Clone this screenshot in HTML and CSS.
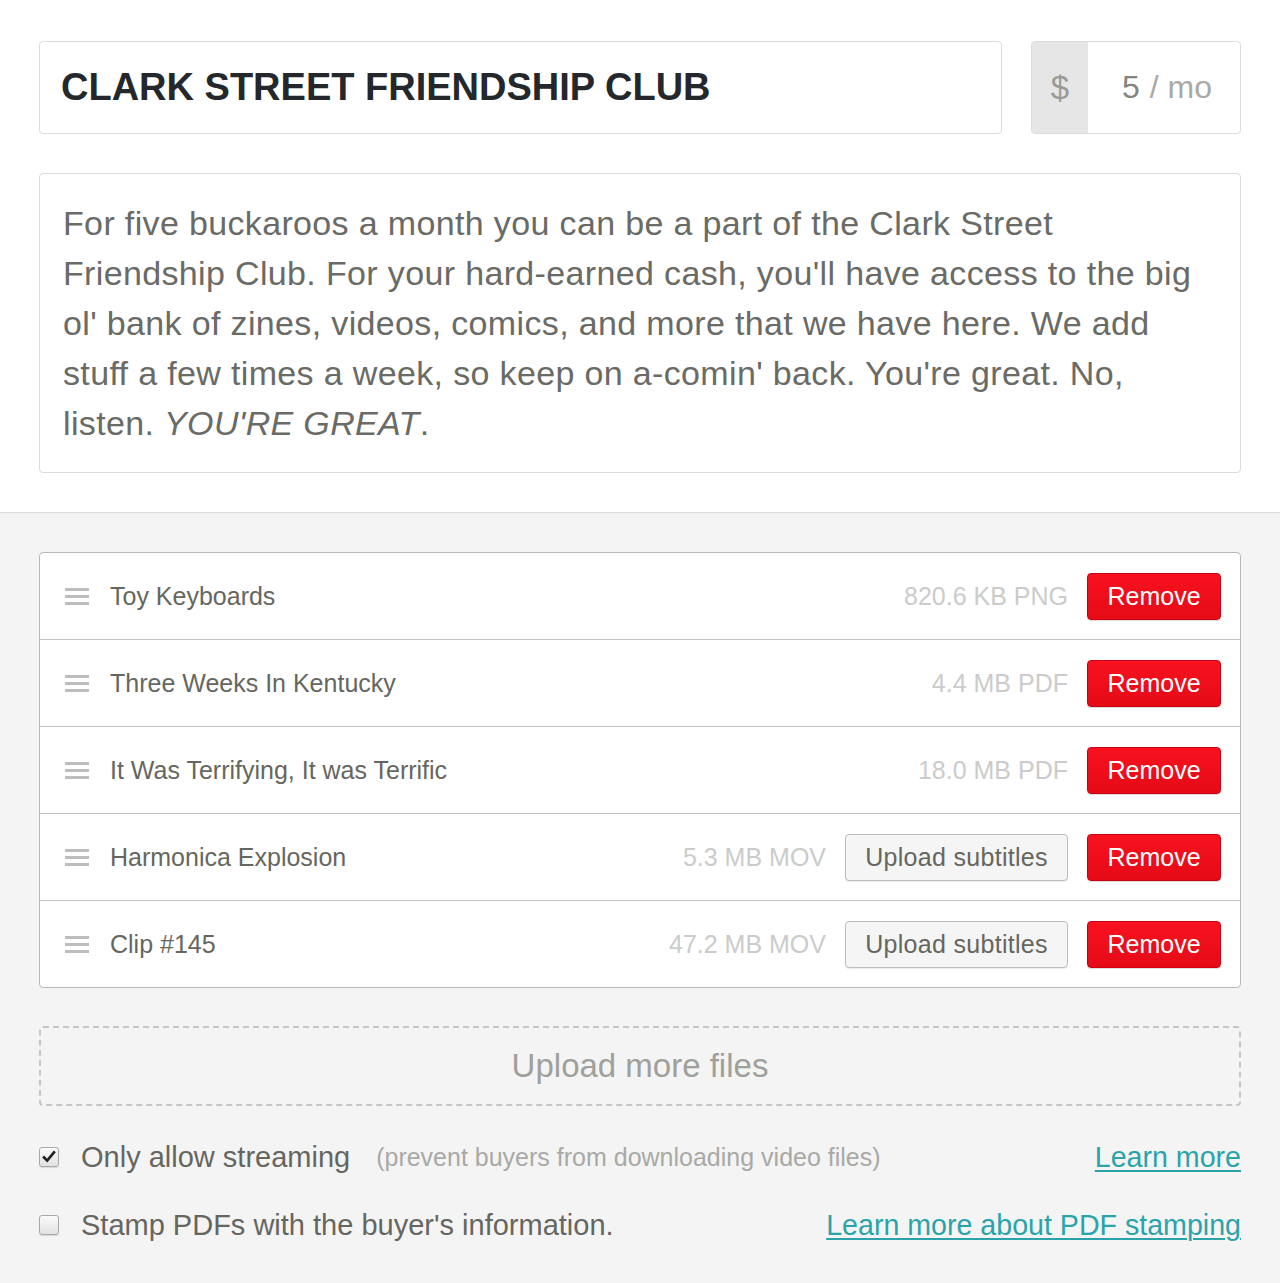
FILE: index.html
```html
<!DOCTYPE html>
<html>
<head>
<meta charset="utf-8">
<link rel="stylesheet" href="styles.css">
</head>
<body>
<div class="top">
  <div class="head-row">
    <div class="title-input">CLARK STREET FRIENDSHIP CLUB</div>
    <div class="price-input">
      <div class="price-prefix">$</div>
      <div class="price-value"><span class="num">5</span> <span class="unit">/ mo</span></div>
    </div>
  </div>
  <div class="desc">For five buckaroos a month you can be a part of the Clark Street Friendship Club. For your hard-earned cash, you'll have access to the big ol' bank of zines, videos, comics, and more that we have here. We add stuff a few times a week, so keep on a-comin' back. You're great. No, listen. <em>YOU'RE GREAT</em>.</div>
</div>
<div class="bottom">
  <div class="files">
    <div class="file">
      <span class="handle"><i></i><i></i><i></i></span>
      <span class="name">Toy Keyboards</span>
      <span class="size">820.6 KB PNG</span>
      <button class="btn-remove">Remove</button>
    </div>
    <div class="file">
      <span class="handle"><i></i><i></i><i></i></span>
      <span class="name">Three Weeks In Kentucky</span>
      <span class="size">4.4 MB PDF</span>
      <button class="btn-remove">Remove</button>
    </div>
    <div class="file">
      <span class="handle"><i></i><i></i><i></i></span>
      <span class="name">It Was Terrifying, It was Terrific</span>
      <span class="size">18.0 MB PDF</span>
      <button class="btn-remove">Remove</button>
    </div>
    <div class="file">
      <span class="handle"><i></i><i></i><i></i></span>
      <span class="name">Harmonica Explosion</span>
      <span class="size">5.3 MB MOV</span>
      <button class="btn-sub">Upload subtitles</button>
      <button class="btn-remove">Remove</button>
    </div>
    <div class="file">
      <span class="handle"><i></i><i></i><i></i></span>
      <span class="name">Clip #145</span>
      <span class="size">47.2 MB MOV</span>
      <button class="btn-sub">Upload subtitles</button>
      <button class="btn-remove">Remove</button>
    </div>
  </div>
  <div class="upload-more">Upload more files</div>
  <div class="option">
    <span class="cb checked"><svg viewBox="0 0 20 20" width="20" height="20"><path d="M4.5 10.5 L8 14 L15.5 5" fill="none" stroke="#222" stroke-width="3" stroke-linecap="square"/></svg></span>
    <span class="opt-label">Only allow streaming</span>
    <span class="opt-note">(prevent buyers from downloading video files)</span>
    <a class="learn" href="#">Learn more</a>
  </div>
  <div class="option">
    <span class="cb"></span>
    <span class="opt-label">Stamp PDFs with the buyer's information.</span>
    <a class="learn" href="#">Learn more about PDF stamping</a>
  </div>
</div>
</body>
</html>
```
FILE: styles.css
```css
* { box-sizing: border-box; }
html, body {
  margin: 0;
  padding: 0;
  background: #f4f4f4;
  font-family: "Liberation Sans", Arial, sans-serif;
}
.top {
  background: #fff;
  padding: 41px 39px 39px 39px;
  border-bottom: 1px solid #dcdcdc;
}
.head-row {
  display: flex;
  gap: 29px;
  height: 93px;
}
.title-input {
  flex: 1;
  border: 1px solid #dcdcdc;
  border-radius: 4px;
  display: flex;
  align-items: center;
  padding-left: 21px;
  font-size: 38px;
  font-weight: bold;
  color: #24272b;
}
.price-input {
  width: 210px;
  display: flex;
  border: 1px solid #dcdcdc;
  border-radius: 4px;
  overflow: hidden;
}
.price-prefix {
  width: 56px;
  background: #e6e6e6;
  color: #9a9a95;
  font-size: 33px;
  display: flex;
  align-items: center;
  justify-content: center;
}
.price-value {
  flex: 1;
  display: flex;
  align-items: center;
  justify-content: flex-end;
  padding-right: 28px;
  font-size: 32px;
  gap: 10px;
}
.price-value .num { color: #85857f; }
.price-value .unit { color: #a9a9a5; }
.desc {
  margin-top: 39px;
  border: 1px solid #dcdcdc;
  border-radius: 4px;
  padding: 24px 24px 24px 23px;
  font-size: 34px;
  letter-spacing: 0.35px;
  line-height: 50px;
  color: #6a6a66;
  height: 300px;
}
.desc em { font-style: italic; }
.bottom {
  padding: 39px 39px 40px 39px;
}
.files {
  background: #fff;
  border: 1px solid #b9b9b9;
  border-radius: 4px;
}
.file {
  height: 87px;
  display: flex;
  align-items: center;
  padding: 1px 19px 0 25px;
  border-top: 1px solid #c4c4c4;
}
.file:first-child { border-top: none; height: 86px; }
.handle {
  width: 24px;
  display: flex;
  flex-direction: column;
  gap: 4px;
  margin-right: 21px;
}
.handle i {
  display: block;
  height: 3px;
  background: #bdbdbd;
}
.name {
  flex: 1;
  font-size: 25px;
  color: #666661;
}
.size {
  font-size: 25px;
  color: #cbcbcb;
  margin-right: 19px;
}
.btn-remove {
  width: 134px;
  height: 47px;
  border: 1px solid #c8000f;
  border-radius: 4px;
  background: linear-gradient(#f8121f, #e60a17);
  color: #fff;
  font-family: inherit;
  font-size: 25px;
  padding: 0;
  box-shadow: 0 1px 1px rgba(0,0,0,0.15);
}
.btn-sub {
  width: 223px;
  height: 47px;
  border: 1px solid #bcbcbc;
  border-radius: 4px;
  background: #f5f5f5;
  color: #66665f;
  font-family: inherit;
  font-size: 25px;
  letter-spacing: 0.3px;
  padding: 0;
  margin-right: 19px;
  box-shadow: 0 1px 1px rgba(0,0,0,0.08);
}
.upload-more {
  margin-top: 38px;
  height: 80px;
  border: 2px dashed #c6c6c6;
  border-radius: 4px;
  display: flex;
  align-items: center;
  justify-content: center;
  font-size: 33px;
  color: #a0a09b;
}
.option {
  display: flex;
  align-items: center;
  height: 34px;
  margin-top: 34px;
}
.option + .option { margin-top: 34px; }
.cb {
  width: 20px;
  height: 20px;
  border: 1px solid #a9a9a9;
  border-radius: 3px;
  background: linear-gradient(#fafafa, #e2e2e2);
  box-shadow: 0 1px 1px rgba(0,0,0,0.12);
  margin-right: 22px;
  display: flex;
  align-items: center;
  justify-content: center;
}
.cb svg { width: 18px; height: 18px; }
.opt-label {
  font-size: 29px;
  color: #666661;
}
.opt-note {
  font-size: 25px;
  color: #a9a9a5;
  margin-left: 26px;
}
.learn {
  margin-left: auto;
  font-size: 28.6px;
  color: #2aa4aa;
  text-decoration: underline;
  text-underline-offset: 3px;
  text-decoration-thickness: 2px;
}
```
